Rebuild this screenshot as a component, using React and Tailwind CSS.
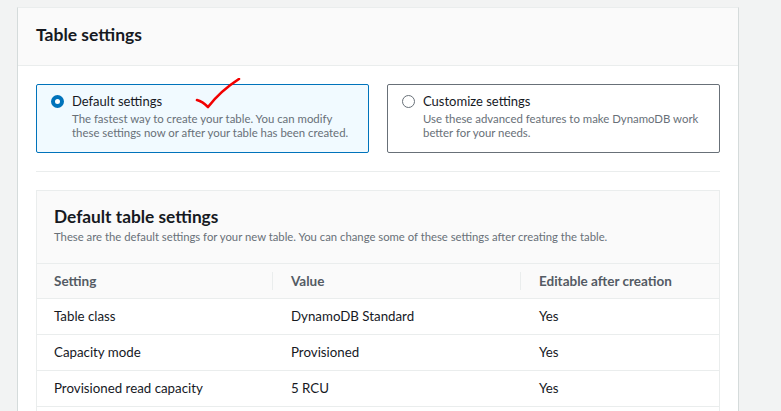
export default function App() {
  const rows = [
    ["Table class", "DynamoDB Standard", "Yes"],
    ["Capacity mode", "Provisioned", "Yes"],
    ["Provisioned read capacity", "5 RCU", "Yes"],
  ];
  return (
    <div
      className="w-full h-[411px] bg-[#f2f3f3] overflow-hidden pl-[17px] pt-[7px]"
      style={{ fontFamily: "Lato, 'Liberation Sans', sans-serif" }}
    >
      <div className="w-[722px] h-[420px] bg-white border-l border-r border-t border-l-[#d5dbdb] border-r-[#d5dbdb] border-t-[#eaeded]">
        <div className="h-[58px] bg-[#fafafa] border-b border-[#eaeded] px-[18px] flex items-center pb-[3px]">
          <h2 className="text-[17.5px] font-bold text-[#16191f]">Table settings</h2>
        </div>
        <div className="px-[18px] pt-[18px]">
          <div className="grid grid-cols-2 gap-[18px]">
            <div className="relative h-[69px] border border-[#0073bb] bg-[#f1faff] rounded-[2px] pl-[14px] pt-[7px] flex gap-[8px]">
              <div className="mt-[3px] w-[13px] h-[13px] rounded-full border-[4px] border-[#0073bb] bg-white shrink-0" />
              <div>
                <div className="text-[13px] leading-[18px] text-[#16191f]">Default settings</div>
                <div className="text-[11.4px] leading-[14px] text-[#687078] mt-[2px]">
                  The fastest way to create your table. You can modify
                  <br />
                  these settings now or after your table has been created.
                </div>
              </div>
              <svg
                className="absolute left-[158px] top-[-7px]"
                width="46"
                height="34"
                viewBox="0 0 46 34"
              >
                <path
                  d="M2 22 C 6 23, 10 26, 13 29 C 20 20, 30 10, 44 1"
                  fill="none"
                  stroke="#f20000"
                  strokeWidth="2.6"
                  strokeLinecap="round"
                  strokeLinejoin="round"
                />
              </svg>
            </div>
            <div className="h-[69px] border border-[#687078] bg-white rounded-[2px] pl-[14px] pt-[7px] flex gap-[8px]">
              <div className="mt-[3px] w-[13px] h-[13px] rounded-full border border-[#687078] bg-white shrink-0" />
              <div>
                <div className="text-[13px] leading-[18px] text-[#16191f]">Customize settings</div>
                <div className="text-[11.4px] leading-[14px] text-[#687078] mt-[2px]">
                  Use these advanced features to make DynamoDB work
                  <br />
                  better for your needs.
                </div>
              </div>
            </div>
          </div>
          <div className="mt-[18px] h-px bg-[#eaeded]" />
          <div className="mt-[18px] border border-[#eaeded]">
            <div className="h-[72px] bg-[#fafafa] px-[17px] pt-[15px]">
              <div className="text-[17.3px] leading-[22px] font-bold text-[#16191f]">Default table settings</div>
              <div className="text-[11.3px] leading-[16px] text-[#687078] mt-[1px]">
                These are the default settings for your new table. You can change some of these settings after creating the table.
              </div>
            </div>
            <div className="grid grid-cols-[235px_248px_1fr] h-[35px] bg-[#fafafa] border-t border-[#eaeded] items-center text-[13.5px] font-bold text-[#545b64]">
              <div className="pl-[17px]">Setting</div>
              <div className="pl-[18px] border-l border-[#eaeded] h-[18px] flex items-center">Value</div>
              <div className="pl-[18px] border-l border-[#eaeded] h-[18px] flex items-center">Editable after creation</div>
            </div>
            {rows.map((r) => (
              <div
                key={r[0]}
                className="grid grid-cols-[235px_248px_1fr] h-[36px] border-t border-[#eaeded] items-center text-[13.3px] text-[#16191f]"
              >
                <div className="pl-[17px]">{r[0]}</div>
                <div className="pl-[19px]">{r[1]}</div>
                <div className="pl-[19px]">{r[2]}</div>
              </div>
            ))}
            <div className="h-[20px] border-t border-[#eaeded]" />
          </div>
        </div>
      </div>
    </div>
  );
}
